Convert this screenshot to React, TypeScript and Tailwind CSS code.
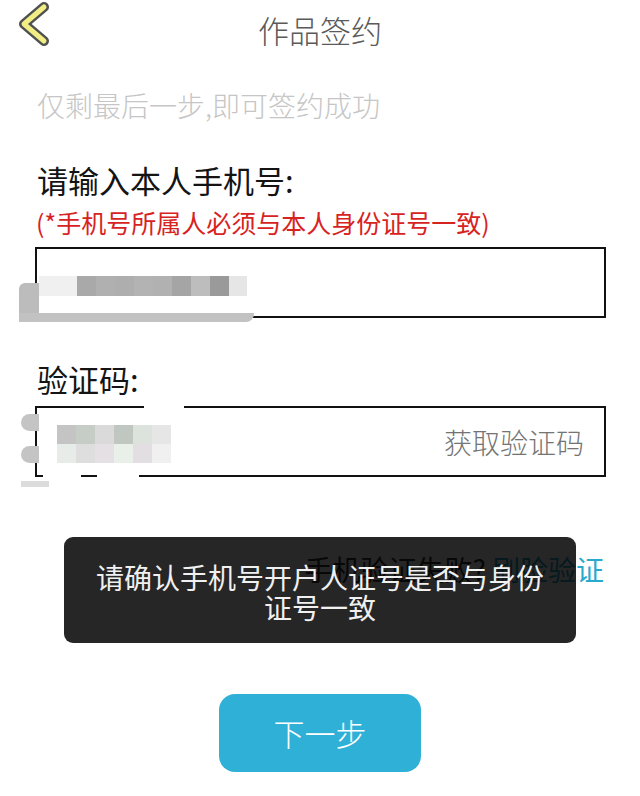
import React from 'react';

const FONT = '"Noto Sans CJK SC", "Noto Sans", sans-serif';

// pixelated strip that stands in for the blurred phone number
const phoneMosaic = ['#a9a9a9', '#b0b0b0', '#aeaeae', '#b3b3b3', '#b1b1b1', '#a5a5a5', '#bdbdbd', '#9a9a9a'];
const codeTop = ['#c4c4c4', '#c6ccc6', '#dadada', '#c0c7c0', '#dce2dc', '#e6e6e6'];
const codeBottom = ['#e8ece8', '#dedede', '#e4e0e4', '#e9efe9', '#e2dee2', '#f0f0f0'];

const BackIcon: React.FC = () => (
  <svg width="44" height="48" viewBox="0 0 44 48" className="ml-[10px]">
    <polyline points="34,7 14,24 34,41" fill="none" stroke="#505050" strokeWidth="10" strokeLinecap="round" strokeLinejoin="round" />
    <polyline points="34,7 14,24 34,41" fill="none" stroke="#f2ee86" strokeWidth="5" strokeLinecap="round" strokeLinejoin="round" />
  </svg>
);

const App: React.FC = () => {
  return (
    <div className="relative w-[640px] h-[796px] bg-white overflow-hidden" style={{ fontFamily: FONT }}>
      {/* header */}
      <div className="flex items-start h-[60px]">
        <BackIcon />
        <div className="flex-1 text-center text-[31px] leading-[40px] mt-[10px] text-[#5a5a5a] pr-[54px] font-light">作品签约</div>
      </div>

      <div className="pl-[37px] mt-[27px] text-[28px] leading-[36px] text-[#c6c6c6] font-light">仅剩最后一步,即可签约成功</div>

      <div className="pl-[37px] mt-[37px] text-[31px] leading-[40px] text-[#141414]">请输入本人手机号:</div>
      <div className="pl-[36px] mt-[7px] text-[25px] leading-[30px] text-[#d7231f]">(*手机号所属人必须与本人身份证号一致)</div>

      {/* phone input */}
      <div className="relative ml-[35px] mr-[34px] mt-[10px] h-[71px] border-2 border-[#111] flex items-center">
        <div className="flex h-[20px] ml-[2px] mt-[6px]">
          <div className="w-[38px] bg-[#f0f0f0]" />
          {phoneMosaic.map((c, i) => (
            <div key={i} className="w-[19px]" style={{ backgroundColor: c }} />
          ))}
          <div className="w-[18px] bg-[#e6e6e6]" />
        </div>
        <div className="absolute left-[-18px] top-[34px] w-[20px] h-[38px] bg-[#bcbcbc] rounded-l-[6px]" />
        <div className="absolute left-[-18px] top-[64px] w-[235px] h-[9px] bg-[#c2c2c2] rounded-br-[8px]" />
      </div>

      <div className="pl-[37px] mt-[41px] text-[31px] leading-[40px] text-[#141414]">验证码:</div>

      {/* code input */}
      <div className="relative ml-[35px] mr-[34px] mt-[7px] h-[71px] border-2 border-[#111] flex items-center justify-between">
        <div className="flex flex-col ml-[20px] mt-[4px]">
          <div className="flex h-[19px]">
            {codeTop.map((c, i) => (
              <div key={i} className="w-[19px]" style={{ backgroundColor: c }} />
            ))}
          </div>
          <div className="flex h-[19px]">
            {codeBottom.map((c, i) => (
              <div key={i} className="w-[19px]" style={{ backgroundColor: c }} />
            ))}
          </div>
        </div>
        <span className="mr-[20px] text-[28px] leading-[36px] text-[#747474] font-light">获取验证码</span>
        <div className="absolute left-[107px] top-[-3px] w-[40px] h-[4px] bg-white" />
        <div className="absolute left-[6px] bottom-[-3px] w-[38px] h-[4px] bg-white" />
        <div className="absolute left-[60px] bottom-[-3px] w-[42px] h-[4px] bg-white" />
        <div className="absolute left-[-16px] top-[6px] w-[18px] h-[17px] bg-[#c4c4c4] rounded-l-full" />
        <div className="absolute left-[-16px] top-[38px] w-[18px] h-[17px] bg-[#c4c4c4] rounded-l-full" />
        <div className="absolute left-[-16px] bottom-[-12px] w-[28px] h-[6px] bg-[#dcdcdc]" />
      </div>

      {/* fallback link, sitting under the toast */}
      <div className="mt-[74px] pr-[36px] text-right text-[28px] leading-[36px]">
        <span className="text-[#333333]">手机验证失败? </span>
        <span className="text-[#2aa9cc]">刷脸验证</span>
      </div>

      <button className="block mx-auto mt-[107px] w-[202px] h-[78px] rounded-[16px] bg-[#2fb0d7] text-white text-[31px] leading-[40px] font-light">
        下一步
      </button>

      {/* toast */}
      <div className="absolute left-[64px] top-[537px] w-[512px] h-[106px] rounded-[9px] bg-black/[0.85] flex items-center justify-center px-[30px]">
        <p className="text-center text-[28px] leading-[30px] text-[#f0f0f0] mt-[4px]">
          请确认手机号开户人证号是否与身份
          <br />
          证号一致
        </p>
      </div>
    </div>
  );
};

export default App;
